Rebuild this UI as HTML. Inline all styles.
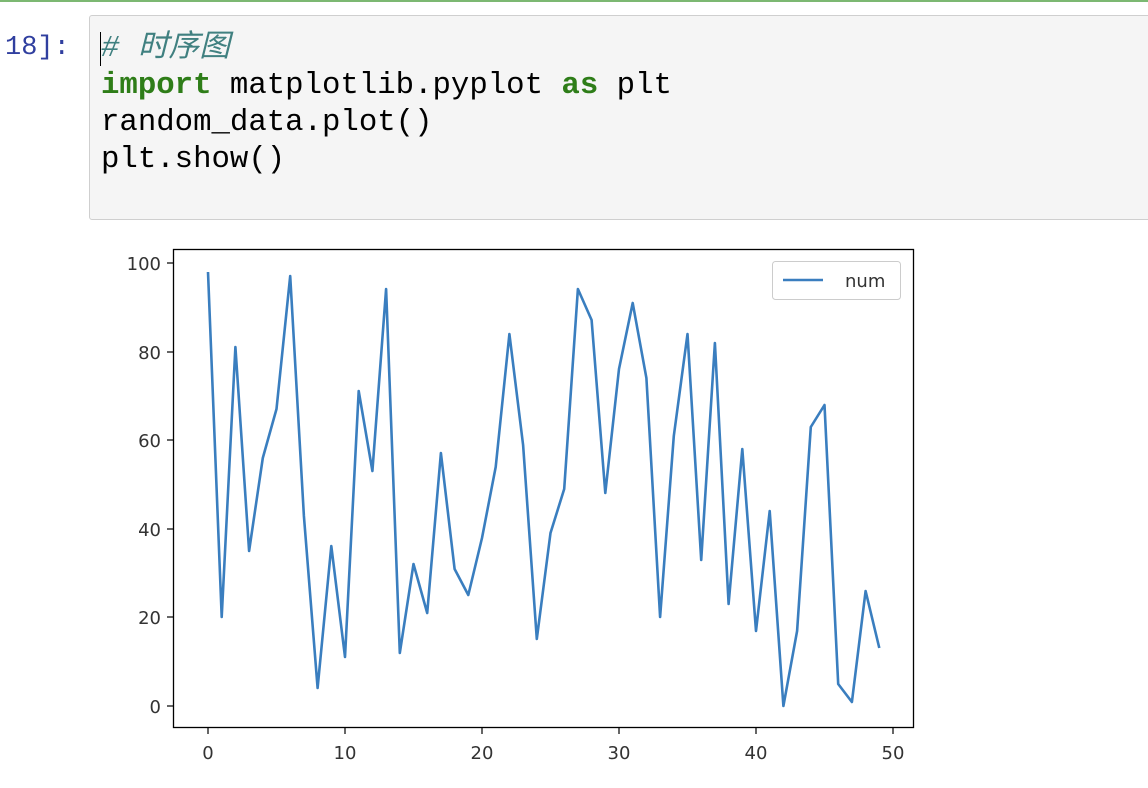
<!DOCTYPE html>
<html><head><meta charset="utf-8"><style>
body{margin:0;width:1148px;height:788px;background:#fff;overflow:hidden;position:relative;font-family:"Liberation Sans",sans-serif}
.top{position:absolute;left:0;top:0;width:1148px;height:2px;background:#7cb872}
.prompt{position:absolute;left:5px;top:30px;font:27px/37px "Liberation Mono",monospace;color:#303f9f}
.cell{position:absolute;left:89px;top:15px;width:1070px;height:205px;background:#f5f5f5;border:1px solid #cfcfcf;border-radius:3px;box-sizing:border-box}
pre{margin:0;position:absolute;left:101px;top:30px;font:30.7px/37px "Liberation Mono","Noto Sans CJK SC",monospace;color:#000}
.c{color:#408080;font-style:italic}.k{color:#2e7d18;font-weight:bold}
.cur{position:absolute;left:100px;top:32px;width:1px;height:34px;background:#000}
</style></head><body>
<div class="top"></div>
<div class="prompt">18]:</div>
<div class="cell"></div>
<pre><span class="c"># 时序图</span>
<span class="k">import</span> matplotlib.pyplot <span class="k">as</span> plt
random_data.plot()
plt.show()</pre>
<div class="cur"></div>
<svg width="1148" height="788" style="position:absolute;left:0;top:0" font-family="DejaVu Sans, Liberation Sans, sans-serif" font-size="18" fill="#333">
<rect x="173.5" y="249.5" width="740" height="478" fill="none" stroke="#000" stroke-width="1.3"/>
<g stroke="#000" stroke-width="1.2">
<line x1="167" x2="173" y1="263" y2="263"/><line x1="167" x2="173" y1="352" y2="352"/><line x1="167" x2="173" y1="440" y2="440"/><line x1="167" x2="173" y1="529" y2="529"/><line x1="167" x2="173" y1="617" y2="617"/><line x1="167" x2="173" y1="706" y2="706"/>
<line y1="728" y2="734" x1="208" x2="208"/><line y1="728" y2="734" x1="345" x2="345"/><line y1="728" y2="734" x1="482" x2="482"/><line y1="728" y2="734" x1="619" x2="619"/><line y1="728" y2="734" x1="756" x2="756"/><line y1="728" y2="734" x1="893" x2="893"/>
</g>
<g text-anchor="end"><text x="161" y="270">100</text><text x="161" y="359">80</text><text x="161" y="447">60</text><text x="161" y="536">40</text><text x="161" y="624">20</text><text x="161" y="713">0</text></g>
<g text-anchor="middle"><text x="208" y="759">0</text><text x="345" y="759">10</text><text x="482" y="759">20</text><text x="619" y="759">30</text><text x="756" y="759">40</text><text x="893" y="759">50</text></g>
<polyline fill="none" stroke="#3a7ebf" stroke-width="2.6" stroke-linejoin="round" points="208,272 221.7,617 235.4,347 249.1,551 262.8,458 276.5,409 290.2,276 303.9,516 317.6,688 331.3,546 345,657 358.7,391 372.4,471 386.1,289 399.8,653 413.5,564 427.2,613 440.9,453 454.6,569 468.3,595 482,538 495.7,467 509.4,334 523.1,445 536.8,639 550.5,533 564.2,489 577.9,289 591.6,320 605.3,493 619,369 632.7,303 646.4,378 660.1,617 673.8,436 687.5,334 701.2,560 714.9,343 728.6,604 742.3,449 756,631 769.7,511 783.4,706 797.1,631 810.8,427 824.5,405 838.2,684 851.9,702 865.6,591 879.3,648"/>
<rect x="772.5" y="261.5" width="128" height="38" rx="3" fill="#fff" stroke="#ccc"/>
<line x1="783" x2="823" y1="280" y2="280" stroke="#3a7ebf" stroke-width="2.6"/>
<text x="845" y="287">num</text>
</svg>
</body></html>
